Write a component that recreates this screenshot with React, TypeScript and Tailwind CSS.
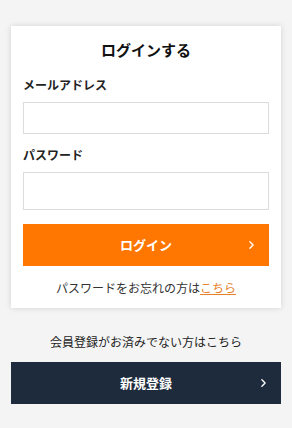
import { ChevronRight } from 'lucide-react';

const font = { fontFamily: '"Noto Sans CJK JP", "Noto Sans", sans-serif' };

function Field({ label, type, height }: { label: string; type: string; height: string }) {
  return (
    <div>
      <label className="block text-[12px] leading-[18px] font-bold text-[#222]">{label}</label>
      <input
        type={type}
        className={`mt-[8px] block w-full border border-[#dcdcdc] bg-white px-2 outline-none ${height}`}
      />
    </div>
  );
}

export default function App() {
  return (
    <div className="min-h-[428px] bg-[#f4f4f4] px-[11px] pt-[26px] pb-6" style={font}>
      {/* Login card */}
      <div className="bg-white px-[12px] pt-[12px] pb-[11px] shadow-[0_0_6px_rgba(0,0,0,0.14)]">
        <h1 className="text-center text-[15px] leading-[23px] font-bold text-[#111]">ログインする</h1>

        <div className="mt-[15px] flex flex-col gap-[12px]">
          <Field label="メールアドレス" type="email" height="h-[32px]" />
          <Field label="パスワード" type="password" height="h-[38px]" />
        </div>

        <button className="relative mt-[14px] flex h-[42px] w-full items-center justify-center bg-[#ff7700] text-[13px] font-bold text-white">
          ログイン
          <ChevronRight className="absolute right-[11px] top-1/2 -translate-y-1/2" size={13} strokeWidth={2.5} />
        </button>

        <p className="mt-[13px] text-center text-[12px] leading-[18px] text-[#333]">
          パスワードをお忘れの方は
          <a href="#" className="text-[#e8822a] underline">こちら</a>
        </p>
      </div>

      {/* Register */}
      <p className="mt-[25px] text-center text-[12px] leading-[18px] text-[#222]">
        会員登録がお済みでない方はこちら
      </p>
      <button className="relative mt-[11px] flex h-[42px] w-full items-center justify-center bg-[#1e2b3d] text-[13px] font-bold text-white">
        新規登録
        <ChevronRight className="absolute right-[11px] top-1/2 -translate-y-1/2" size={13} strokeWidth={2.5} />
      </button>
    </div>
  );
}
